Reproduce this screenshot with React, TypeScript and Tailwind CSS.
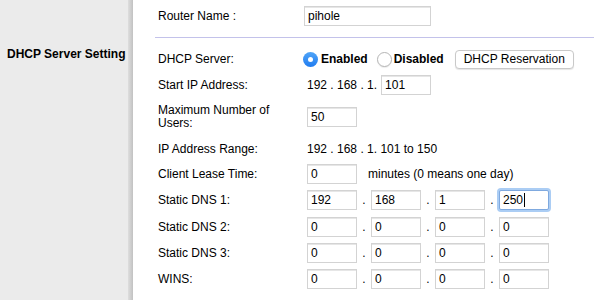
import React from 'react'

const Field = ({ value, w = 50, focused = false }: { value: string; w?: number; focused?: boolean }) => (
  <div
    className={
      focused
        ? 'h-[20px] flex items-center pl-[3px] bg-white border border-[#7fa9df] rounded-[2px] shadow-[0_0_0_2px_#abcdf4]'
        : 'h-[20px] flex items-center pl-[3px] bg-white border border-[#d3d3d3] shadow-[inset_0_1px_0_#e6e6e6]'
    }
    style={{ width: w }}
  >
    <span>{value}</span>
    {focused && <span className="w-[1px] h-[14px] bg-black ml-[1px]" />}
  </div>
)

const Dot = () => <span className="w-[14px] text-center">.</span>

const IpFields = ({ parts, focusLast = false }: { parts: string[]; focusLast?: boolean }) => (
  <div className="flex items-center">
    <Field value={parts[0]} />
    <Dot />
    <Field value={parts[1]} />
    <Dot />
    <Field value={parts[2]} />
    <Dot />
    <Field value={parts[3]} focused={focusLast} />
  </div>
)

const Row = ({ label, children, className = '' }: { label: React.ReactNode; children?: React.ReactNode; className?: string }) => (
  <div className={`flex items-center h-[20px] ${className}`}>
    <div className="w-[149px] leading-[13px]">{label}</div>
    <div className="flex items-center">{children}</div>
  </div>
)

export default function App() {
  return (
    <div className="w-[594px] h-[300px] flex bg-white text-[12px] text-black font-['Liberation_Sans',Arial,sans-serif] overflow-hidden">
      {/* left menu column */}
      <div className="w-[128px] bg-[#ebebeb] pl-[7px] pt-[45px]">
        <div className="font-bold">DHCP Server Setting</div>
      </div>
      <div className="w-[5px] bg-gradient-to-r from-[#dedede] to-[#c2c2c2]" />

      <div className="flex-1 pl-[22px] pt-[6px]">
        <Row label="Router Name :" className="pl-[3px]">
          <div className="-ml-[3px]">
            <Field value="pihole" w={127} />
          </div>
        </Row>

        <div className="mt-[11px] h-[1px] bg-[#c3c2ea]" />

        <div className="pl-[3px]">
          <Row label="DHCP Server:" className="mt-[11px]">
            <div className="-ml-[4px] flex items-center">
              <span className="w-[15px] h-[15px] rounded-full bg-gradient-to-b from-[#4fa4f7] to-[#1f7cf0] flex items-center justify-center">
                <span className="w-[5px] h-[5px] rounded-full bg-white" />
              </span>
              <span className="ml-[3px] font-bold">Enabled</span>
              <span className="ml-[9px] w-[15px] h-[15px] rounded-full bg-white border border-[#b5b5b5] shadow-[0_1px_1px_rgba(0,0,0,0.08)]" />
              <span className="ml-[2px] font-bold">Disabled</span>
              <button className="ml-[11px] h-[19px] px-[8px] bg-white border border-[#c9c9c9] rounded-[4px] shadow-[0_1px_1px_rgba(0,0,0,0.1)] leading-none">
                DHCP Reservation
              </button>
            </div>
          </Row>

          <Row label="Start IP Address:" className="mt-[6px]">
            <span className="mr-[4px]">192 . 168 . 1.</span>
            <Field value="101" />
          </Row>

          <div className="flex items-center h-[28px] mt-[8px]">
            <div className="w-[149px] leading-[13px]">
              Maximum Number of
              <br />
              Users:
            </div>
            <Field value="50" />
          </div>

          <Row label="IP Address Range:" className="mt-[8px]">
            <span>192 . 168 . 1. 101 to 150</span>
          </Row>

          <Row label="Client Lease Time:" className="mt-[5px]">
            <Field value="0" />
            <span className="ml-[11px]">minutes (0 means one day)</span>
          </Row>

          <Row label="Static DNS 1:" className="mt-[6px]">
            <IpFields parts={['192', '168', '1', '250']} focusLast />
          </Row>
          <Row label="Static DNS 2:" className="mt-[7px]">
            <IpFields parts={['0', '0', '0', '0']} />
          </Row>
          <Row label="Static DNS 3:" className="mt-[6px]">
            <IpFields parts={['0', '0', '0', '0']} />
          </Row>
          <Row label="WINS:" className="mt-[6px]">
            <IpFields parts={['0', '0', '0', '0']} />
          </Row>
        </div>
      </div>
    </div>
  )
}
